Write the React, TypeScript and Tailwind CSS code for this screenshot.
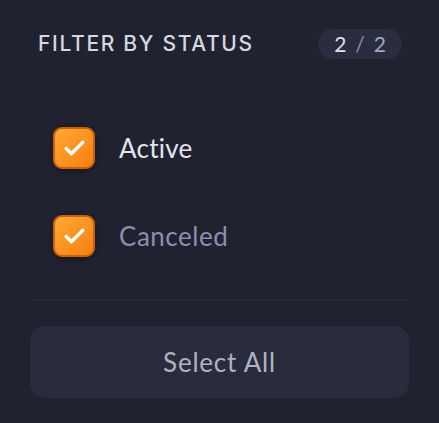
import { Check } from 'lucide-react';

const statuses = [
  { label: 'Active', muted: false },
  { label: 'Canceled', muted: true },
];

export default function App() {
  return (
    <div
      className="h-[423px] w-[439px] bg-[#212230] px-[30px]"
      style={{ fontFamily: 'Lato, "Noto Sans", sans-serif' }}
    >
      {/* Header */}
      <div className="flex h-[88px] items-center justify-between pl-[8px] pr-[7px]">
        <h3
          className="text-[21px] font-medium uppercase tracking-[0.08em] text-[#d5d7e1]"
          style={{ fontFamily: 'Inter, sans-serif' }}
        >
          Filter by status
        </h3>
        <span className="flex h-[30px] items-center rounded-full bg-[#2a2c40] px-[16px] text-[21px] text-[#dfe1ea]">
          2 <span className="ml-[9px] text-[#8c90aa]">/</span>
          <span className="ml-[9px] text-[#a3a7bf]">2</span>
        </span>
      </div>

      {/* Options */}
      <ul className="mt-[39px] space-y-[46px] pl-[23px]">
        {statuses.map((s) => (
          <li key={s.label} className="flex items-center gap-[24px]">
            <span className="flex h-[42px] w-[42px] items-center justify-center rounded-[9px] border-2 border-[#c8620a] bg-gradient-to-br from-[#ffa833] to-[#f77f0a] shadow-[0_2px_6px_rgba(0,0,0,0.35)]">
              <Check className="h-[25px] w-[25px] text-white" strokeWidth={3.2} />
            </span>
            <span
              className={
                s.muted
                  ? 'text-[26px] tracking-[0.02em] text-[#8b90ad]'
                  : 'text-[26px] tracking-[0.01em] text-[#e3e5ee]'
              }
            >
              {s.label}
            </span>
          </li>
        ))}
      </ul>

      <div className="mt-[43px] border-t border-[#2b2d3c]" />

      <button className="mt-[25px] flex h-[72px] w-full items-center justify-center rounded-[15px] bg-[#2a2c3e] text-[26px] tracking-[0.03em] text-[#aeb2c7]">
        Select All
      </button>
    </div>
  );
}
